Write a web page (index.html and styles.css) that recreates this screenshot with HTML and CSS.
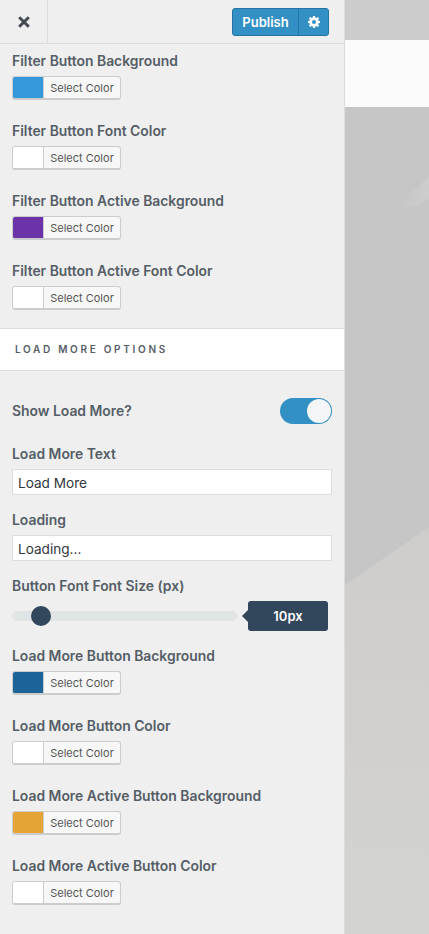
FILE: index.html
```html
<!DOCTYPE html>
<html lang="en">
<head>
<meta charset="utf-8">
<title>Customizer</title>
<link rel="stylesheet" href="styles.css">
</head>
<body>
<div class="app">
  <aside class="panel">
    <header class="topbar">
      <button class="close" aria-label="Close">
        <svg width="14" height="14" viewBox="0 0 14 14"><path d="M2.2 2.2l9.6 9.6M11.8 2.2l-9.6 9.6" stroke="#444851" stroke-width="2.9" fill="none"/></svg>
      </button>
      <div class="publish">
        <span class="publish-main">Publish</span>
        <span class="publish-gear">
          <svg width="12" height="12" viewBox="0 0 12 12"><path fill="#fff" fill-rule="evenodd" d="M5 0h2l.3 1.6 1 .4L9.7 1l1.4 1.4-1 1.4.4 1 1.5.2v2l-1.5.3-.4 1 1 1.3-1.4 1.4-1.4-1-1 .4L7 12H5l-.3-1.6-1-.4-1.4 1-1.4-1.4 1-1.3-.4-1L0 7V5l1.5-.2.4-1-1-1.4L2.3 1l1.4 1 1-.4zM6 4a2 2 0 1 0 0 4 2 2 0 0 0 0-4z"/></svg>
        </span>
      </div>
    </header>

    <section class="group group-top">
      <div class="field">
        <div class="label">Filter Button Background</div>
        <div class="picker"><span class="swatch swatch-blue"></span><span class="picker-text">Select Color</span></div>
      </div>
      <div class="field">
        <div class="label">Filter Button Font Color</div>
        <div class="picker"><span class="swatch"></span><span class="picker-text">Select Color</span></div>
      </div>
      <div class="field">
        <div class="label">Filter Button Active Background</div>
        <div class="picker"><span class="swatch swatch-purple"></span><span class="picker-text">Select Color</span></div>
      </div>
      <div class="field">
        <div class="label">Filter Button Active Font Color</div>
        <div class="picker"><span class="swatch"></span><span class="picker-text">Select Color</span></div>
      </div>
    </section>

    <h3 class="section-title">Load More Options</h3>

    <section class="group group-bottom">
      <div class="toggle-row">
        <div class="label">Show Load More?</div>
        <div class="toggle"><span class="knob"></span></div>
      </div>
      <div class="text-field">
        <div class="label">Load More Text</div>
        <div class="input">Load More</div>
      </div>
      <div class="text-field">
        <div class="label">Loading</div>
        <div class="input">Loading...</div>
      </div>
      <div class="slider-field">
        <div class="label">Button Font Font Size (px)</div>
        <div class="slider-row">
          <div class="track"><span class="thumb"></span></div>
          <div class="bubble">10px</div>
        </div>
      </div>
      <div class="field">
        <div class="label">Load More Button Background</div>
        <div class="picker"><span class="swatch swatch-navy"></span><span class="picker-text">Select Color</span></div>
      </div>
      <div class="field">
        <div class="label">Load More Button Color</div>
        <div class="picker"><span class="swatch"></span><span class="picker-text">Select Color</span></div>
      </div>
      <div class="field">
        <div class="label">Load More Active Button Background</div>
        <div class="picker"><span class="swatch swatch-orange"></span><span class="picker-text">Select Color</span></div>
      </div>
      <div class="field">
        <div class="label">Load More Active Button Color</div>
        <div class="picker"><span class="swatch"></span><span class="picker-text">Select Color</span></div>
      </div>
    </section>
  </aside>

  <main class="preview">
    <div class="preview-top"></div>
    <div class="preview-white"></div>
    <div class="preview-hero">
      <svg class="hero-art" width="84" height="827" viewBox="0 0 84 827" preserveAspectRatio="none">
        <defs>
          <linearGradient id="floor" x1="0" y1="0" x2="0" y2="1"><stop offset="0" stop-color="#cfcdcb"/><stop offset="1" stop-color="#d3d3d2"/></linearGradient>
          <linearGradient id="glint" x1="0" y1="0" x2="1" y2="0"><stop offset="0" stop-color="#c6c6c6"/><stop offset="1" stop-color="#cdcdcd"/></linearGradient>
        </defs>
        <rect width="84" height="827" fill="#c6c6c6"/>
        <path d="M52 98 L84 70 V92 L68 100 Z" fill="url(#glint)"/>
        <path d="M0 478 L84 420 V827 H0 Z" fill="url(#floor)"/>
      </svg>
    </div>
  </main>
</div>
</body>
</html>
```
FILE: styles.css
```css
* { box-sizing: border-box; }
html, body { margin: 0; padding: 0; height: 100%; }
body { font-family: Inter, "Liberation Sans", sans-serif; background: #efefef; overflow: hidden; }

.app { display: flex; width: 429px; height: 934px; overflow: hidden; }

.panel { width: 345px; flex: none; background: #efefef; border-right: 1px solid #ddd; }

.topbar {
  height: 44px;
  display: flex;
  align-items: center;
  justify-content: space-between;
  border-bottom: 1px solid #ddd;
  padding-right: 15px;
}
.close {
  width: 48px;
  height: 43px;
  padding: 0;
  border: 0;
  border-right: 1px solid #ddd;
  background: transparent;
  display: flex;
  align-items: center;
  justify-content: center;
}
.publish {
  display: flex;
  height: 28px;
  color: #fff;
  background: #3390c4;
  border: 1px solid #2374a5;
  border-radius: 3px;
}
.publish-main {
  width: 66px;
  font-size: 13px;
  font-weight: 600;
  line-height: 26px;
  text-align: center;
  border-right: 1px solid #2374a5;
}
.publish-gear { width: 29px; display: flex; align-items: center; justify-content: center; }

.label {
  color: #555d66;
  font-size: 13.9px;
  font-weight: 600;
  line-height: 20px;
}

.group-top { padding: 7px 12px 0; height: 284px; }
.group-bottom { padding: 27px 12px 0; }

.field { height: 70px; }
.field .label { margin-bottom: 5px; }

.picker {
  display: flex;
  width: 109px;
  height: 24px;
  background: #f7f7f7;
  border: 1px solid #ccc;
  border-bottom-width: 2px;
  border-radius: 3px;
  overflow: hidden;
}
.swatch { width: 31px; flex: none; background: #fff; border-right: 1px solid #ccc; }
.swatch-blue { background: #3498db; }
.swatch-purple { background: #6c33a8; }
.swatch-navy { background: #1c6398; }
.swatch-orange { background: #e5a536; }
.picker-text {
  flex: 1;
  color: #555;
  font-size: 11px;
  line-height: 23px;
  text-align: center;
}

.section-title {
  margin: 0;
  height: 43px;
  background: #fff;
  border-top: 1px solid #ddd;
  border-bottom: 1px solid #ddd;
  padding-left: 15px;
  color: #555d66;
  font-size: 10px;
  font-weight: 600;
  line-height: 41px;
  letter-spacing: 2.7px;
  text-transform: uppercase;
}

.toggle-row {
  display: flex;
  align-items: center;
  justify-content: space-between;
  height: 26px;
  margin-bottom: 20px;
}
.toggle {
  width: 52px;
  height: 26px;
  flex: none;
  display: flex;
  justify-content: flex-end;
  align-items: center;
  padding-right: 1px;
  background: #3390c4;
  border-radius: 13px;
}
.knob { width: 24px; height: 24px; border-radius: 50%; background: #f4f5f6; }

.text-field { height: 66px; }
.text-field .label { margin-bottom: 5px; }
.input {
  height: 26px;
  background: #fff;
  border: 1px solid #ddd;
  padding-left: 5px;
  color: #32373c;
  font-size: 13.6px;
  line-height: 26px;
}

.slider-field { height: 70px; }
.slider-row { display: flex; align-items: center; gap: 11px; margin-top: 5px; height: 30px; }
.track {
  width: 225px;
  height: 10px;
  background: #e0e4e5;
  border-radius: 5px;
  display: flex;
  align-items: center;
  padding-left: 19px;
}
.thumb { width: 20px; height: 20px; border-radius: 50%; background: #32465c; }
.bubble {
  position: relative;
  width: 80px;
  height: 30px;
  background: #32465c;
  border-radius: 3px;
  color: #fff;
  font-size: 13px;
  font-weight: 600;
  line-height: 30px;
  text-align: center;
}
.bubble::before {
  content: "";
  position: absolute;
  left: -6px;
  top: 9px;
  border-top: 6px solid transparent;
  border-bottom: 6px solid transparent;
  border-right: 6px solid #32465c;
}

.preview { flex: 1; min-width: 0; display: flex; flex-direction: column; }
.preview-top { height: 40px; flex: none; background: #ccc; }
.preview-white { height: 67px; flex: none; background: #fbfbfb; }
.preview-hero { flex: 1; min-height: 0; overflow: hidden; }
.hero-art { display: block; }
```
